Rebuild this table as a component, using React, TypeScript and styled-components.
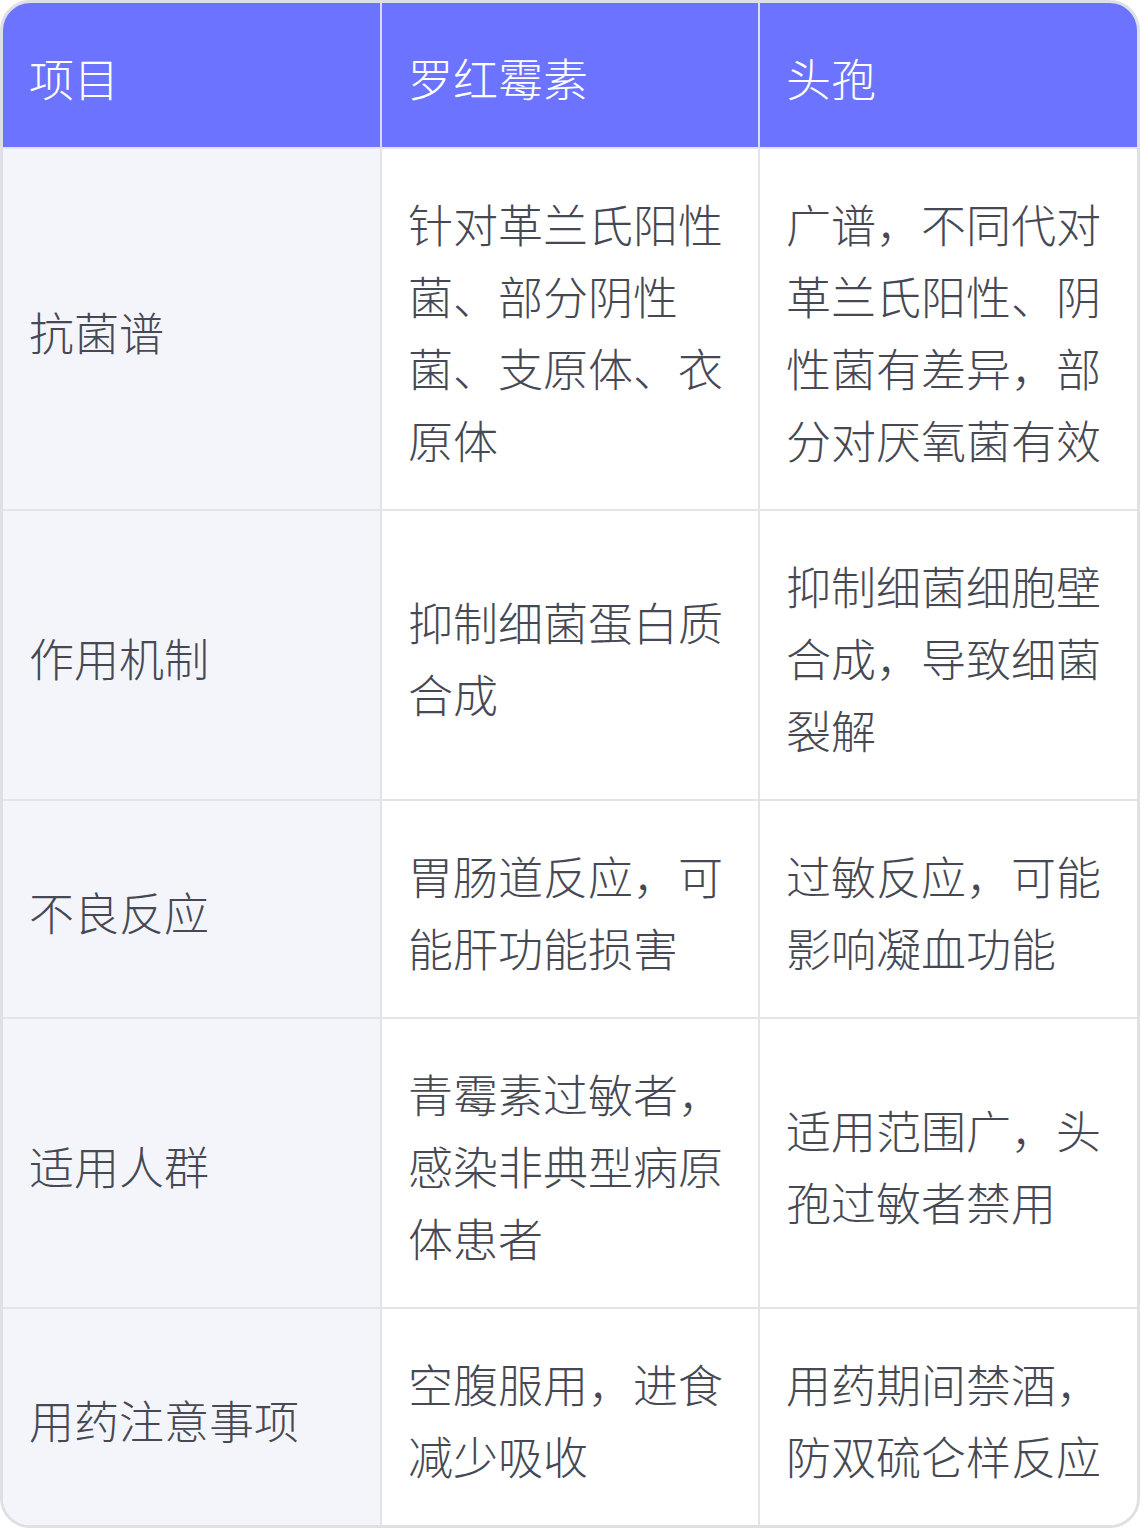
import React from 'react';
import styled, { createGlobalStyle } from 'styled-components';

const GlobalStyle = createGlobalStyle`
  html, body {
    margin: 0;
    padding: 0;
    background: #ffffff;
  }
  body {
    font-family: "Noto Sans CJK SC", "Noto Sans", sans-serif;
  }
`;

const TableFrame = styled.div`
  width: 1140px;
  box-sizing: border-box;
  border: 3px solid #dfe0e6;
  border-radius: 30px;
  overflow: hidden;
`;

const Table = styled.table`
  width: 100%;
  table-layout: fixed;
  border-collapse: collapse;
  font-size: 45px;
  font-weight: 300;
  line-height: 72px;
`;

const HeadCell = styled.th`
  background: #6c74ff;
  color: #ffffff;
  font-weight: 300;
  text-align: left;
  padding: 39px 26px 33px;
  border-left: 2px solid #dcdcf4;
  border-bottom: 2px solid #e3e4ea;

  &:first-child {
    border-left: none;
  }
`;

const Cell = styled.td<{ $label?: boolean }>`
  background: ${(p) => (p.$label ? '#f4f5fa' : '#ffffff')};
  color: #464953;
  padding: 39px 26px 33px;
  vertical-align: middle;
  border-left: 2px solid #e3e4ea;
  border-top: 2px solid #e3e4ea;

  &:first-child {
    border-left: none;
  }
`;

const Row = styled.tr`
  &:first-child td {
    border-top: none;
  }
`;

const rows = [
  ['抗菌谱', '针对革兰氏阳性菌、部分阴性菌、支原体、衣原体', '广谱，不同代对革兰氏阳性、阴性菌有差异，部分对厌氧菌有效'],
  ['作用机制', '抑制细菌蛋白质合成', '抑制细菌细胞壁合成，导致细菌裂解'],
  ['不良反应', '胃肠道反应，可能肝功能损害', '过敏反应，可能影响凝血功能'],
  ['适用人群', '青霉素过敏者，感染非典型病原体患者', '适用范围广，头孢过敏者禁用'],
  ['用药注意事项', '空腹服用，进食减少吸收', '用药期间禁酒，防双硫仑样反应'],
];

export default function App(): React.ReactElement {
  return (
    <>
      <GlobalStyle />
      <TableFrame>
        <Table>
          <thead>
            <tr>
              <HeadCell>项目</HeadCell>
              <HeadCell>罗红霉素</HeadCell>
              <HeadCell>头孢</HeadCell>
            </tr>
          </thead>
          <tbody>
            {rows.map((r) => (
              <Row key={r[0]}>
                <Cell $label={true}>{r[0]}</Cell>
                <Cell>{r[1]}</Cell>
                <Cell>{r[2]}</Cell>
              </Row>
            ))}
          </tbody>
        </Table>
      </TableFrame>
    </>
  );
}
